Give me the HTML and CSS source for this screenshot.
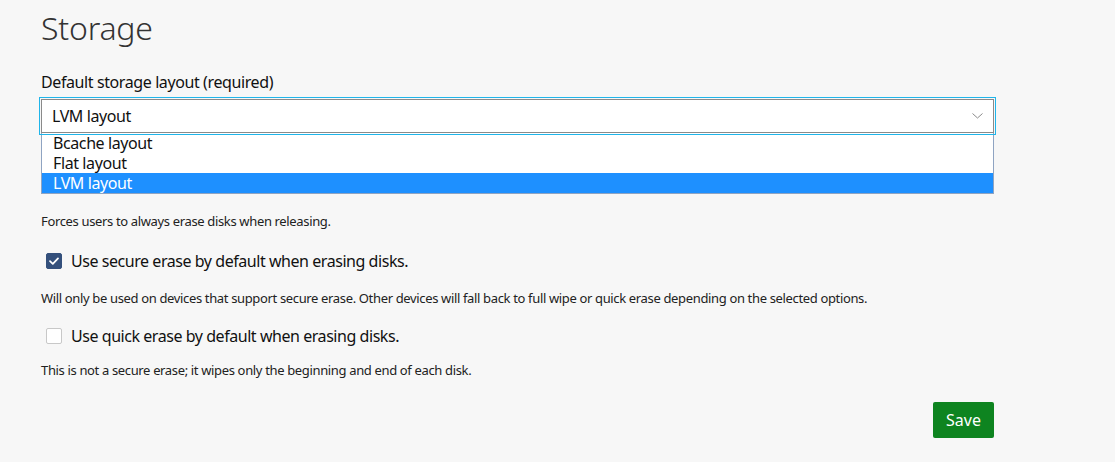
FILE: index.html
```html
<!DOCTYPE html>
<html lang="en">
<head>
<meta charset="utf-8">
<title>Storage</title>
<link rel="stylesheet" href="styles.css">
</head>
<body>
<main class="page">
  <h1 class="title">Storage</h1>
  <div class="field">
    <label class="label">Default storage layout (required)</label>
    <div class="select">
      <span class="select-value">LVM layout</span>
      <svg class="chevron" width="11" height="6" viewBox="0 0 11 6"><path d="M0.5 0.5 L5.5 5 L10.5 0.5" fill="none" stroke="#8a8a8a" stroke-width="1"/></svg>
    </div>
    <ul class="options">
      <li class="option">Bcache layout</li>
      <li class="option">Flat layout</li>
      <li class="option option-selected">LVM layout</li>
    </ul>
  </div>
  <p class="help help-first">Forces users to always erase disks when releasing.</p>
  <div class="check-row">
    <span class="checkbox checkbox-on">
      <svg width="16" height="16" viewBox="0 0 16 16"><path d="M4 8.2 L6.8 10.8 L12 5.4" fill="none" stroke="#fff" stroke-width="1.8" stroke-linecap="round" stroke-linejoin="round"/></svg>
    </span>
    <span class="check-label">Use secure erase by default when erasing disks.</span>
  </div>
  <p class="help">Will only be used on devices that support secure erase. Other devices will fall back to full wipe or quick erase depending on the selected options.</p>
  <div class="check-row check-row-second">
    <span class="checkbox"></span>
    <span class="check-label">Use quick erase by default when erasing disks.</span>
  </div>
  <p class="help">This is not a secure erase; it wipes only the beginning and end of each disk.</p>
  <div class="actions">
    <button class="btn-save" type="button">Save</button>
  </div>
</main>
</body>
</html>
```

FILE: styles.css
```css
html, body {
  margin: 0;
  padding: 0;
  background: #f7f7f7;
}
body {
  font-family: "Noto Sans", "Open Sans", sans-serif;
  color: #111;
}
.page {
  padding: 8px 121px 0 41px;
}
.title {
  margin: 0;
  font-size: 32px;
  font-weight: 300;
  line-height: 40px;
  color: #333;
  letter-spacing: -0.2px;
}
.field {
  margin-top: 24px;
}
.label {
  display: block;
  font-size: 16px;
  line-height: 20px;
  color: #111;
  letter-spacing: -0.4px;
}
.select {
  margin-top: 7px;
  height: 34px;
  box-sizing: border-box;
  border: 1px solid #8a8a8a;
  background: #fff;
  display: flex;
  align-items: center;
  justify-content: space-between;
  padding: 0 10px 0 10px;
  outline: 1px solid #1fb5ea;
  outline-offset: 1px;
}
.select-value {
  font-size: 16px;
  letter-spacing: -0.4px;
}
.chevron {
  display: block;
}
.options {
  list-style: none;
  margin: 0;
  padding: 0;
  border: 1px solid #8fa4c2;
  border-top: none;
  background: #fff;
}
.option {
  height: 20px;
  line-height: 20px;
  font-size: 16px;
  padding-left: 11px;
  color: #111;
  letter-spacing: -0.4px;
}
.option-selected {
  background: #1e90ff;
  color: #fff;
}
.help {
  margin: 0;
  font-size: 13px;
  line-height: 20px;
  color: #222;
  letter-spacing: -0.35px;
}
.help-first {
  margin-top: 17px;
}
.check-row {
  display: flex;
  align-items: center;
  gap: 9px;
  margin: 20px 0 17px 5px;
}
.check-row-second {
  margin-top: 18px;
  margin-bottom: 14px;
}
.checkbox {
  width: 16px;
  height: 16px;
  box-sizing: border-box;
  border: 1px solid #c8c8c8;
  border-radius: 2px;
  background: #fff;
  display: block;
}
.checkbox svg { display: block; margin: -1px; }
.checkbox-on {
  background: #34507c;
  border-color: #34507c;
}
.check-label {
  font-size: 16px;
  line-height: 20px;
  letter-spacing: -0.45px;
}
.actions {
  display: flex;
  justify-content: flex-end;
  margin-top: 22px;
}
.btn-save {
  width: 61px;
  height: 36px;
  border: none;
  border-radius: 2px;
  background: #0e8420;
  color: #fff;
  font-family: inherit;
  font-size: 16px;
  padding: 0;
}
```
